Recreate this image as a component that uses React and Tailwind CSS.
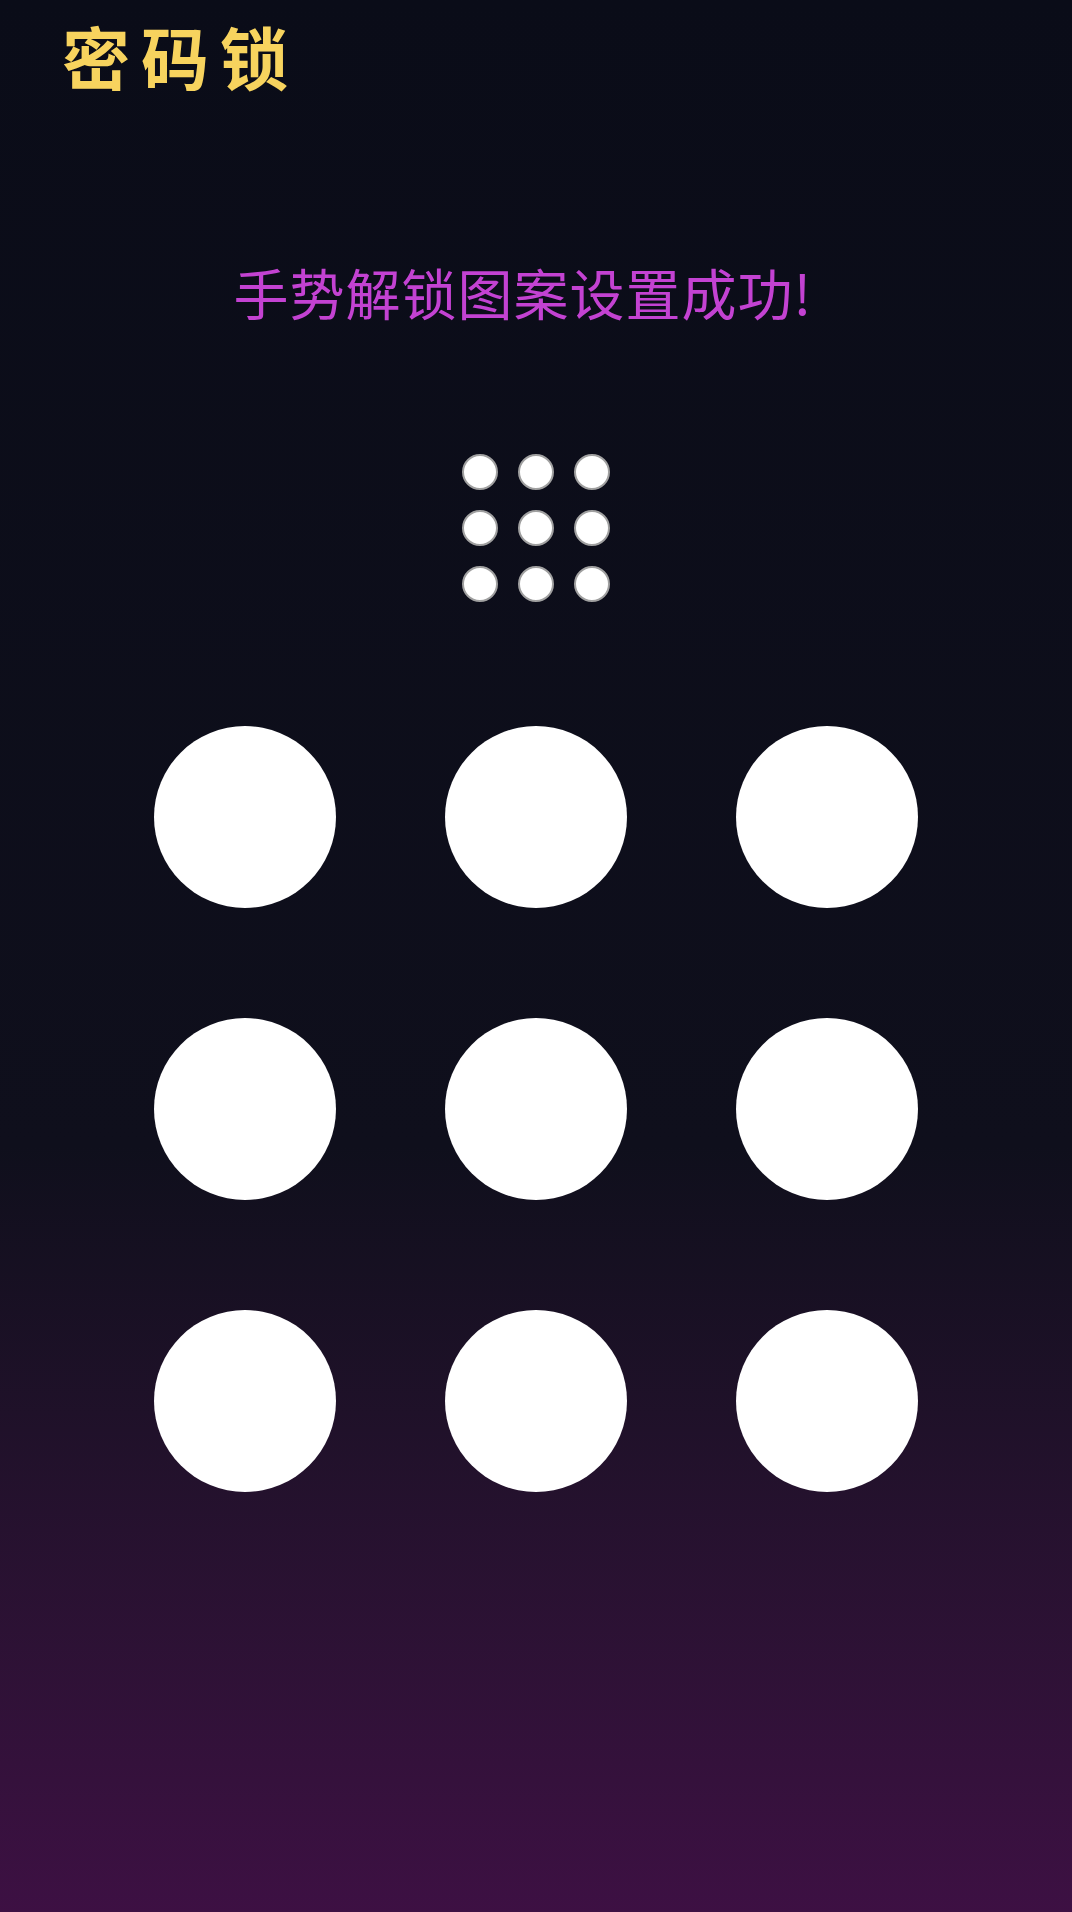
import React from "react";

const cjk = { fontFamily: '"Noto Sans CJK SC", "Noto Sans", sans-serif' };

const App = () => {
  const dots = Array.from({ length: 9 });

  return (
    <div
      className="w-[1072px] h-[1912px] overflow-hidden flex flex-col bg-gradient-to-b from-[#0a0c18] via-[#0f0f1c] via-60% to-[#3d1043]"
      style={cjk}
    >
      <div className="pl-[62px] pt-[14px] h-[100px] flex items-start">
        <h1 className="text-[68px] leading-[84px] font-bold text-[#f7d35e] tracking-[11px]">密码锁</h1>
      </div>

      <div className="mt-[158px] flex justify-center pl-[34px] pr-[60px]">
        <p className="text-[55px] leading-[66px] text-[#c342d2] tracking-[1px]">手势解锁图案设置成功!</p>
      </div>

      <div className="mt-[130px] flex justify-center">
        <div className="grid grid-cols-3 gap-[20px]">
          {dots.map((_, i) => (
            <div
              key={i}
              className="w-[36px] h-[36px] rounded-full bg-white border-[2px] border-[#a0a0a0]"
            />
          ))}
        </div>
      </div>

      <div className="mt-[124px] flex justify-center">
        <div className="grid grid-cols-3 gap-x-[109px] gap-y-[110px]">
          {dots.map((_, i) => (
            <div key={i} className="w-[182px] h-[182px] rounded-full bg-white" />
          ))}
        </div>
      </div>
    </div>
  );
};

export default App;
